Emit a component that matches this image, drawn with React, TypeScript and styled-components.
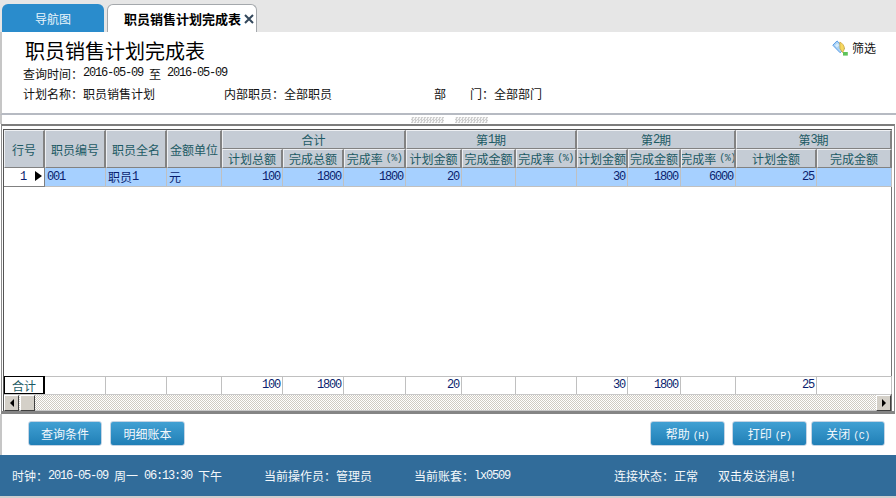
import React from "react";
import styled, { createGlobalStyle } from "styled-components";

const Global = createGlobalStyle`
  html, body { margin: 0; padding: 0; background: #fff; }
  body { width: 896px; height: 498px; overflow: hidden; font-family: "Noto Sans CJK SC", "Liberation Sans", sans-serif; font-size: 12px; color: #111; }
  * { box-sizing: border-box; }
`;

const Page = styled.div`
  width: 896px; height: 498px; display: flex; flex-direction: column; background: #fff;
`;
const TabBar = styled.div`
  height: 32px; flex: none; background: #e6e6e6; display: flex; align-items: flex-end; padding-left: 2px; gap: 3px;
`;
const NavTab = styled.div`
  width: 102px; height: 28px; background: #2a8ccc; border-radius: 6px 6px 0 0; color: #e8f4fb;
  display: flex; align-items: center; padding-left: 33px;
`;
const ActiveTab = styled.div`
  width: 150px; height: 28px; background: #fff; border: 1px solid #a4a8ac; border-bottom: 0; border-radius: 6px 6px 0 0;
  display: flex; align-items: center; padding-left: 16px; font-size: 13px; font-weight: 700; color: #000; gap: 3px; white-space: nowrap;
`;
const Head = styled.div`
  height: 83px; flex: none; position: relative; border-left: 2px solid #c6c6c6; border-bottom: 2px solid #b6bac2; padding: 6px 0 0 21px;
`;
const Title = styled.div`
  font-size: 20px; line-height: 26px; padding-left: 2px; color: #000;
`;
const MetaRow = styled.div`
  display: flex; height: 20px; align-items: center; margin-top: ${p => p.$top || 0}px; white-space: nowrap; color: #111;
`;
const Field = styled.div`
  width: ${p => p.$w}px; flex: none; display: flex; align-items: center;
`;
const Mono = styled.span`
  font-family: "Liberation Mono", monospace; font-size: 12px; letter-spacing: -1.2px; line-height: 14px;
`;
const To = styled.span`
  margin: 0 6px;
`;
const LetterGap = styled.span`
  width: 24px; flex: none;
`;
const FilterLink = styled.div`
  position: absolute; right: 20px; top: 7px; display: flex; align-items: center; gap: 4px; color: #111;
`;
const Splitter = styled.div`
  height: 9px; flex: none; display: flex; justify-content: center; align-items: center; gap: 11px; border-left: 2px solid #c6c6c6;
`;
const Grip = styled.i`
  width: 33px; height: 6px; display: block;
  background: conic-gradient(#cfcfcf 25%, #f4f4f4 0 50%, #cfcfcf 0 75%, #f4f4f4 0) 0 0 / 3px 3px;
`;
const Frame = styled.div`
  height: 290px; flex: none; margin-left: 1px; margin-right: 1px; padding: 3px 2px 0 1px; border-top: 2px solid #7d7d7d; border-left: 1px solid #8c8c8c; border-right: 1px solid #8c8c8c; border-bottom: 3px solid #858585;
  display: flex; flex-direction: column;
`;
const Sheet = styled.div`
  flex: 1; display: flex; flex-direction: column; border-top: 1px solid #555; border-left: 1px solid #555; border-right: 1px solid #777; min-height: 0;
`;
const columns = [41, 61, 61, 55, 61, 61, 62, 56, 54, 61, 51, 53, 55, 81, 75];
const Cols = columns.map(c => c + "px").join(" ");
const Grid = styled.div`
  flex: 1; display: grid; grid-template-columns: ${Cols}; grid-template-rows: 19px 19px 19px 1fr 18px; background: #fff; min-height: 0;
`;
const HeaderCell = styled.div`
  grid-column: ${p => p.$col} / span ${p => p.$cs || 1}; grid-row: ${p => p.$row} / span ${p => p.$rs || 1};
  background: #c5ccd5; color: #1c5a64; display: flex; align-items: center; justify-content: center; white-space: nowrap; overflow: hidden;
  border-top: 1px solid #eef0f3; border-left: 1px solid #eef0f3; border-right: 2px solid #828282; border-bottom: 1px solid #828282;
`;
const Small = styled.span`
  font-size: 10px; margin-left: 3px; font-family: "Liberation Mono", monospace; letter-spacing: -0.5px;
`;
const Cell = styled.div`
  grid-row: ${p => p.$row}; grid-column: ${p => p.$col};
  background: ${p => p.$bg || "transparent"}; color: #0a1e6e; display: flex; align-items: center; padding: 0 2px 1px;
  justify-content: ${p => p.$right ? "flex-end" : "flex-start"}; white-space: nowrap;
  border-right: 1px solid #c0c0c0; border-bottom: 1px solid #c0c0c0;
`;
const RowHead = styled.div`
  grid-row: 3; grid-column: 1; position: relative; background: #fff; color: #0a1e6e; border-right: 1px solid #808080; border-bottom: 1px solid #808080;
  display: flex; align-items: center; justify-content: flex-end; padding-right: 18px;
`;
const Arrow = styled.span`
  position: absolute; right: 2px; top: 3px; width: 0; height: 0; border-left: 7px solid #000; border-top: 5.5px solid transparent; border-bottom: 5.5px solid transparent;
`;
const TotalHead = styled.div`
  grid-row: 5; grid-column: 1; background: #fff; color: #1c5a64; border: 1px solid #000; border-width: 1px 2px 1px 1px; display: flex; align-items: center; justify-content: center;
`;
const TotalCell = styled(Cell)`
  color: #0a1e6e; border-top: 1px solid #c0c0c0; border-bottom: 0;
`;
const Scrollbar = styled.div`
  height: 17px; flex: none; display: flex; justify-content: space-between; position: relative;
  background: conic-gradient(#cfcbc2 25%, #fff 0 50%, #cfcbc2 0 75%, #fff 0) 0 0 / 2px 2px;
  border-top: 1px solid #c8c8c8; border-bottom: 1px solid #c8c8c8;
`;
const ScrollGroup = styled.div`
  display: flex; gap: 1px;
`;
const ScrollButton = styled.div`
  width: 15px; height: 16px; background: #d4d0c8; border-top: 1px solid #fff; border-left: 1px solid #fff; border-right: 1px solid #404040; border-bottom: 1px solid #404040;
  display: flex; align-items: center; justify-content: center;
`;
const LeftTri = styled.i`
  width: 0; height: 0; border-right: 4px solid #000; border-top: 4px solid transparent; border-bottom: 4px solid transparent;
`;
const RightTri = styled.i`
  width: 0; height: 0; border-left: 4px solid #000; border-top: 4px solid transparent; border-bottom: 4px solid transparent;
`;
const Actions = styled.div`
  height: 41px; flex: none; display: flex; align-items: center; padding: 0 11px 2px 26px; border-left: 2px solid #c6c6c6;
`;
const ActionButton = styled.button`
  width: ${p => p.$w}px; height: 25px; margin-left: ${p => p.$ml || 0}px; padding: 0; font: inherit; color: #f2f8fc;
  background: linear-gradient(#41a0d3, #207fb6); border: 1px solid #c4d4e4; border-radius: 3px;
`;
const Spacer = styled.div`
  flex: 1;
`;
const Status = styled.div`
  height: 41px; flex: none; background: #316c9a; color: #f4f8fb; display: flex; align-items: center; padding-left: 12px; white-space: nowrap;
`;
const StatusItem = styled.div`
  width: ${p => p.$w}px; flex: none; display: flex; align-items: center;
`;
const Foot = styled.div`
  height: 2px; flex: none; background: #cfcfcf;
`;

const FilterIcon = () => (
  <svg width="16" height="16" viewBox="0 0 16 16">
    <path d="M.8 5.2 5 .9l7.5 7.4L8.2 12.8z" fill="#a9d2f4" stroke="#5b9ce6" />
    <path d="M3 5.5 5.2 3.2l2 2-2.2 2.2z" fill="#d6ebfb" />
    <path d="M7.8 2c2.6 1.2 4.8 3.8 4.6 7L10.6 12.6 8 8.6z" fill="#f6d860" stroke="#c79f38" strokeWidth=".7" />
    <rect x="11" y="12" width="4.8" height="3.6" fill="#5fc35a" />
  </svg>
);

const CloseIcon = () => (
  <svg width="10" height="10" viewBox="0 0 10 10">
    <path d="M1 1l8 8M9 1l-8 8" stroke="#33475b" strokeWidth="2" />
  </svg>
);

const Rate = () => <>完成率<Small>(%)</Small></>;
const subHeaders: [number, React.ReactNode][] = [
  [5, "计划总额"], [6, "完成总额"], [7, <Rate />],
  [8, "计划金额"], [9, "完成金额"], [10, <Rate />],
  [11, "计划金额"], [12, "完成金额"], [13, <Rate />],
  [14, "计划金额"], [15, "完成金额"],
];
const leading = ["行号", "职员编号", "职员全名", "金额单位"];
const groups: [number, number, string, boolean][] = [
  [5, 3, "合计", false], [8, 3, "第", true], [11, 3, "第", true], [14, 2, "第", true],
];
const periodNo: Record<number, number> = { 8: 1, 11: 2, 14: 3 };
const row: Record<number, string> = { 5: "100", 6: "1800", 7: "1800", 8: "20", 10: "", 11: "30", 12: "1800", 13: "6000", 14: "25" };
const totals: Record<number, string> = { 5: "100", 6: "1800", 8: "20", 11: "30", 12: "1800", 14: "25" };
const all = Array.from({ length: 15 }, (_, i) => i + 1);

export default function App() {
  return (
    <Page>
      <Global />
      <TabBar>
        <NavTab>导航图</NavTab>
        <ActiveTab>职员销售计划完成表<CloseIcon /></ActiveTab>
      </TabBar>
      <Head>
        <Title>职员销售计划完成表</Title>
        <MetaRow $top={-1}>查询时间：<Mono>2016-05-09</Mono><To>至</To><Mono>2016-05-09</Mono></MetaRow>
        <MetaRow>
          <Field $w={201}>计划名称：职员销售计划</Field>
          <Field $w={210}>内部职员：全部职员</Field>
          <Field $w={200}>部<LetterGap />门：全部部门</Field>
        </MetaRow>
        <FilterLink><FilterIcon />筛选</FilterLink>
      </Head>
      <Splitter><Grip /><Grip /></Splitter>
      <Frame>
        <Sheet>
          <Grid>
            {leading.map((t, i) => <HeaderCell key={t} $col={i + 1} $row={1} $rs={2}>{t}</HeaderCell>)}
            {groups.map(([c, s, t, p]) => (
              <HeaderCell key={c} $col={c} $cs={s} $row={1}>{t}{p && <><Mono>{periodNo[c]}</Mono>期</>}</HeaderCell>
            ))}
            {subHeaders.map(([c, t]) => <HeaderCell key={c} $col={c} $row={2}>{t}</HeaderCell>)}
            <RowHead><Mono>1</Mono><Arrow /></RowHead>
            <Cell $row={3} $col={2} $bg="#a6d0ff"><Mono>001</Mono></Cell>
            <Cell $row={3} $col={3} $bg="#a6d0ff">职员<Mono>1</Mono></Cell>
            <Cell $row={3} $col={4} $bg="#a6d0ff">元</Cell>
            {all.slice(4).map(c => (
              <Cell key={c} $row={3} $col={c} $bg="#a6d0ff" $right><Mono>{row[c]}</Mono></Cell>
            ))}
            <TotalHead>合计</TotalHead>
            {all.slice(1).map(c => (
              <TotalCell key={c} $row={5} $col={c} $right><Mono>{totals[c]}</Mono></TotalCell>
            ))}
          </Grid>
          <Scrollbar>
            <ScrollGroup>
              <ScrollButton><LeftTri /></ScrollButton>
              <ScrollButton />
            </ScrollGroup>
            <ScrollButton><RightTri /></ScrollButton>
          </Scrollbar>
        </Sheet>
      </Frame>
      <Actions>
        <ActionButton $w={74}>查询条件</ActionButton>
        <ActionButton $w={75} $ml={8}>明细账本</ActionButton>
        <Spacer />
        <ActionButton $w={75}>帮助<Small>(H)</Small></ActionButton>
        <ActionButton $w={75} $ml={7}>打印<Small>(P)</Small></ActionButton>
        <ActionButton $w={74} $ml={4}>关闭<Small>(C)</Small></ActionButton>
      </Actions>
      <Status>
        <StatusItem $w={252}>时钟：<Mono>2016-05-09</Mono><To>周一</To><Mono>06:13:30</Mono><To>下午</To></StatusItem>
        <StatusItem $w={150}>当前操作员：管理员</StatusItem>
        <StatusItem $w={200}>当前账套：<Mono>lx0509</Mono></StatusItem>
        <StatusItem $w={104}>连接状态：正常</StatusItem>
        <StatusItem $w={110}>双击发送消息！</StatusItem>
      </Status>
      <Foot />
    </Page>
  );
}
